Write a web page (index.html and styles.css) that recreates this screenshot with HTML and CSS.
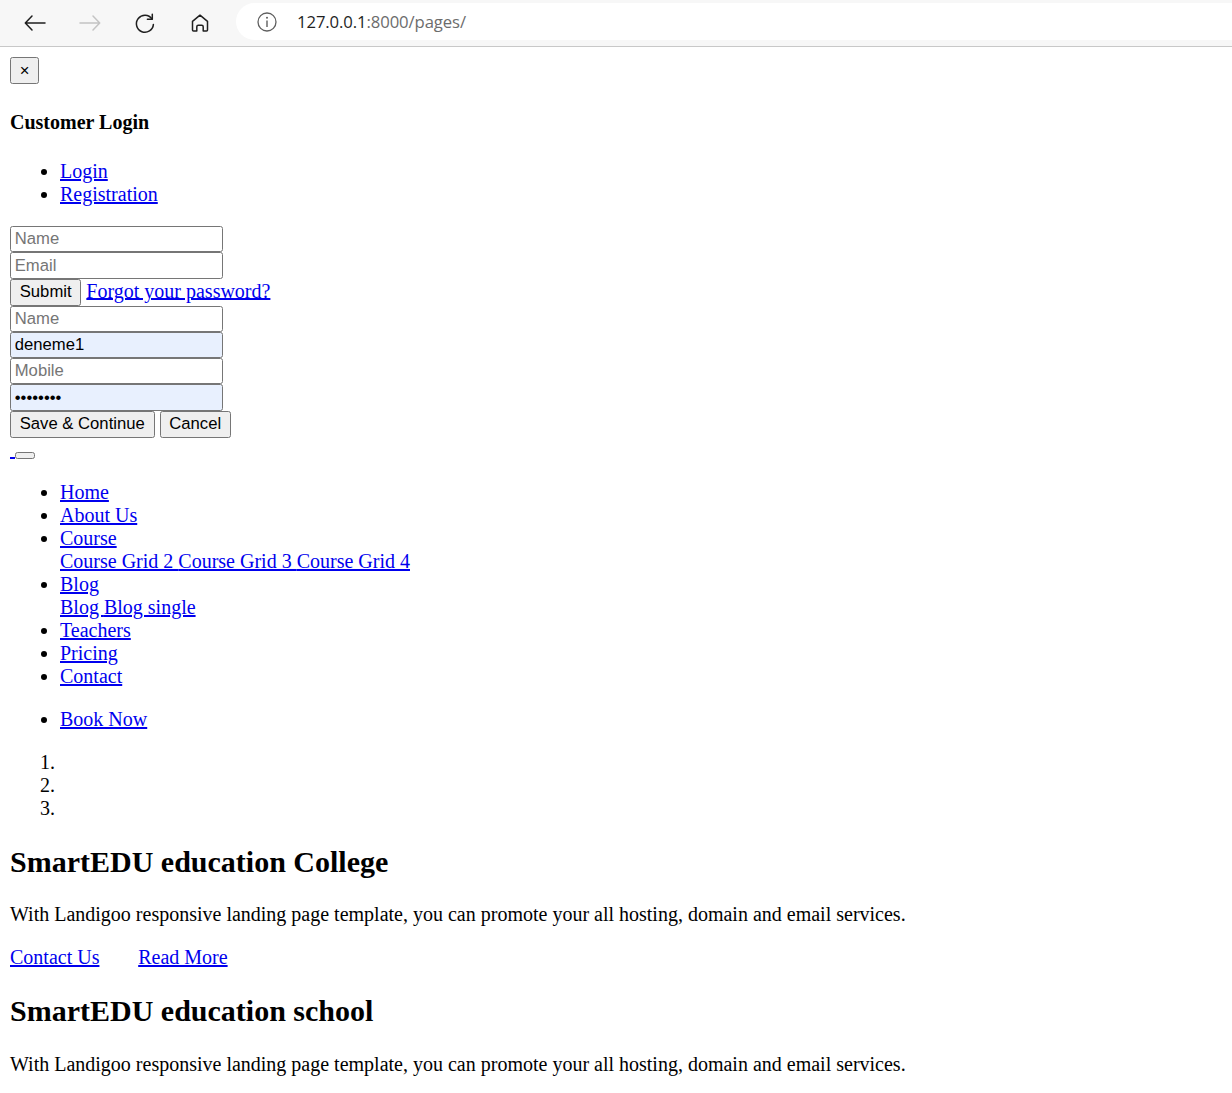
FILE: index.html
```html
<!DOCTYPE html>
<html lang="en">
<head>
<meta charset="utf-8">
<title>SmartEDU</title>
<link rel="stylesheet" href="styles.css">
</head>
<body>
<div class="chrome">
  <div class="navbtns">
    <span class="navbtn"><svg width="24" height="24" viewBox="0 0 24 24"><path d="M22 12H2.5M9 5L2.3 12 9 19" fill="none" stroke="#1f1f1f" stroke-width="1.5" stroke-linecap="round" stroke-linejoin="round"/></svg></span>
    <span class="navbtn"><svg width="24" height="24" viewBox="0 0 24 24"><path d="M2 12h19.5M15 5l6.7 7-6.7 7" fill="none" stroke="#c4c4c4" stroke-width="1.5" stroke-linecap="round" stroke-linejoin="round"/></svg></span>
    <span class="navbtn"><svg width="24" height="24" viewBox="0 0 24 24"><path d="M18.93 8A8.5 8.5 0 1 0 20.4 13.4" fill="none" stroke="#1f1f1f" stroke-width="1.5" stroke-linecap="round"/><path d="M19.3 3.3V8.2H14.4" fill="none" stroke="#1f1f1f" stroke-width="1.5" stroke-linecap="round" stroke-linejoin="round"/></svg></span>
    <span class="navbtn"><svg width="24" height="24" viewBox="0 0 24 24"><path d="M4.5 10.3L12 4.2l7.5 6.1V19a1 1 0 0 1-1 1h-3.3v-4.3a1.5 1.5 0 0 0-1.5-1.5h-3.4a1.5 1.5 0 0 0-1.5 1.5V20H5.5a1 1 0 0 1-1-1z" fill="none" stroke="#1f1f1f" stroke-width="1.5" stroke-linejoin="round"/></svg></span>
  </div>
  <div class="omnibox">
    <svg class="info" width="22" height="22" viewBox="0 0 22 22"><circle cx="11" cy="11" r="9" fill="none" stroke="#5f5f5f" stroke-width="1.3"/><circle cx="11" cy="6.8" r="1" fill="#5f5f5f"/><path d="M11 9.5v6.5" stroke="#5f5f5f" stroke-width="1.4"/></svg>
    <span class="url"><span class="host">127.0.0.1</span>:8000/pages/</span>
  </div>
</div>

<div class="page">
  <button class="btn">&times;</button>
  <h4 class="title">Customer Login</h4>
  <ul class="list">
    <li><a href="#">Login</a></li>
    <li><a href="#">Registration</a></li>
  </ul>
  <form class="form">
    <div class="row"><input class="field" type="text" placeholder="Name"></div>
    <div class="row"><input class="field" type="text" placeholder="Email"></div>
    <div class="row"><button class="btn" type="button">Submit</button> <a href="#">Forgot your password?</a></div>
  </form>
  <form class="form">
    <div class="row"><input class="field" type="text" placeholder="Name"></div>
    <div class="row"><input class="field filled" type="text" value="deneme1"></div>
    <div class="row"><input class="field" type="text" placeholder="Mobile"></div>
    <div class="row"><input class="field filled" type="password" value="12345678"></div>
    <div class="row"><button class="btn" type="button">Save &amp; Continue</button> <button class="btn" type="button">Cancel</button></div>
  </form>
  <div class="row"><a href="#">&nbsp;</a><button class="btn" type="button"></button></div>
  <ul class="list">
    <li><a href="#">Home</a></li>
    <li><a href="#">About Us</a></li>
    <li><a href="#">Course</a>
      <div><a href="#">Course Grid 2 </a><a href="#">Course Grid 3 </a><a href="#">Course Grid 4</a></div>
    </li>
    <li><a href="#">Blog</a>
      <div><a href="#">Blog </a><a href="#">Blog single</a></div>
    </li>
    <li><a href="#">Teachers</a></li>
    <li><a href="#">Pricing</a></li>
    <li><a href="#">Contact</a></li>
  </ul>
  <ul class="list">
    <li><a href="#">Book Now</a></li>
  </ul>
  <ol class="list">
    <li></li>
    <li></li>
    <li></li>
  </ol>
  <h2 class="heading">SmartEDU education College</h2>
  <p class="text">With Landigoo responsive landing page template, you can promote your all hosting, domain and email services.</p>
  <p class="text"><a href="#" class="cta">Contact Us</a><a href="#" class="cta">Read More</a></p>
  <h2 class="heading">SmartEDU education school</h2>
  <p class="text">With Landigoo responsive landing page template, you can promote your all hosting, domain and email services.</p>
</div>
</body>
</html>
```

FILE: styles.css
```css
html, body {
  margin: 0;
  padding: 0;
  background: #ffffff;
}

.chrome {
  height: 46px;
  background: #f7f7f7;
  border-bottom: 1px solid #c8c8c8;
  display: flex;
  align-items: flex-start;
  overflow: hidden;
}

.navbtns {
  display: flex;
  padding-left: 7px;
  height: 46px;
  align-items: center;
}

.navbtn {
  width: 55px;
  height: 24px;
  display: flex;
  justify-content: center;
  align-items: center;
}

.omnibox {
  margin-top: 3px;
  margin-left: 9px;
  flex: 1;
  height: 37px;
  background: #ffffff;
  border-radius: 19px 0 0 19px;
  display: flex;
  align-items: center;
  padding-left: 20px;
}

.info {
  flex: none;
}

.url {
  margin-left: 19px;
  font-family: "Open Sans", "Noto Sans", sans-serif;
  font-size: 16.7px;
  letter-spacing: -0.1px;
  color: #6c6c6c;
  white-space: nowrap;
}

.host {
  color: #1f1f1f;
}

.page {
  zoom: 1.25;
  padding: 8px;
  font-family: "Liberation Serif", "Times New Roman", serif;
  font-size: 16px;
  color: #000000;
}

.page a {
  color: #0000ee;
}

.title {
  font-size: 16px;
  font-weight: bold;
  margin: 1.33em 0;
}

.list {
  margin: 16px 0;
  padding-left: 40px;
}

.form {
  margin: 0;
}

.row {
  margin: 0;
}

.btn {
  font-family: "Liberation Sans", Arial, sans-serif;
  font-size: 13.333px;
  line-height: normal;
  color: #000000;
  background: #efefef;
  border: 1px solid #767676;
  border-radius: 2px;
  padding: 2px 7px;
  margin: 0;
}

.field {
  font-family: "Liberation Sans", Arial, sans-serif;
  font-size: 13.333px;
  line-height: normal;
  color: #000000;
  box-sizing: border-box;
  width: 170px;
  height: 21px;
  border: 1px solid #767676;
  border-radius: 2px;
  padding: 1px 3px;
  margin: 0;
  background: #ffffff;
}

.field::placeholder {
  color: #757575;
}

.filled {
  background: #e8f0fe;
}

.heading {
  font-size: 24px;
  font-weight: bold;
  margin: 0.83em 0;
}

.text {
  margin: 16px 0;
}

.cta {
  margin-right: 31px;
}
```
